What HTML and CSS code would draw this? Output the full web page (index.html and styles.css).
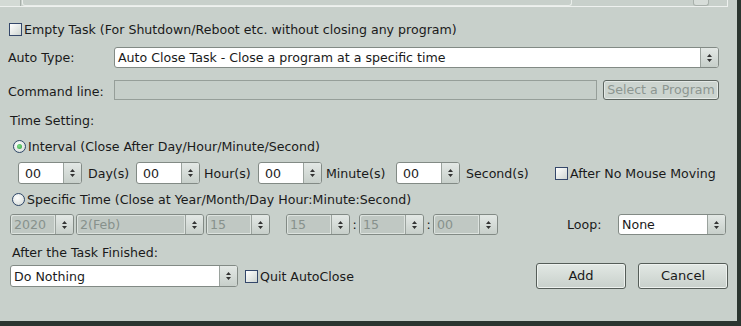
FILE: index.html
```html
<!DOCTYPE html>
<html>
<head>
<meta charset="UTF-8">
<title>Auto Close Task</title>
<link rel="stylesheet" href="styles.css">
</head>
<body>
<div class="frame">
    <div class="topstrip">
        <div class="ts-cell"></div>
        <div class="ts-field"></div>
        <div class="ts-btn"></div>
    </div>

    <div class="row r-empty">
        <span class="chk"></span><span class="ctext">Empty Task (For Shutdown/Reboot etc. without closing any program)</span>
    </div>

    <div class="row r-type">
        <span class="lbl">Auto Type:</span>
        <div class="field w-type"><span class="val">Auto Close Task - Close a program at a specific time</span><span class="arr"><svg width="5" height="8" viewBox="0 0 5 8"><path d="M2.5 0L5 3H0z M0 5h5L2.5 8z" fill="#333"/></svg></span></div>
    </div>

    <div class="row r-cmd">
        <span class="lbl lbl-low">Command line:</span>
        <div class="input-dis"></div>
        <div class="btn-dis">Select a Program</div>
    </div>

    <div class="row r-time">
        <span class="plain">Time Setting:</span>
    </div>

    <div class="row r-interval">
        <span class="radio on"><i></i></span><span class="rtext">Interval (Close After Day/Hour/Minute/Second)</span>
    </div>

    <div class="row r-spin">
        <div class="field spin"><span class="val">00</span><span class="arr"><svg width="5" height="8" viewBox="0 0 5 8"><path d="M2.5 0L5 3H0z M0 5h5L2.5 8z" fill="#333"/></svg></span></div>
        <span class="unit u-day">Day(s)</span>
        <div class="field spin"><span class="val">00</span><span class="arr"><svg width="5" height="8" viewBox="0 0 5 8"><path d="M2.5 0L5 3H0z M0 5h5L2.5 8z" fill="#333"/></svg></span></div>
        <span class="unit u-hour">Hour(s)</span>
        <div class="field spin"><span class="val">00</span><span class="arr"><svg width="5" height="8" viewBox="0 0 5 8"><path d="M2.5 0L5 3H0z M0 5h5L2.5 8z" fill="#333"/></svg></span></div>
        <span class="unit u-min">Minute(s)</span>
        <div class="field spin"><span class="val">00</span><span class="arr"><svg width="5" height="8" viewBox="0 0 5 8"><path d="M2.5 0L5 3H0z M0 5h5L2.5 8z" fill="#333"/></svg></span></div>
        <span class="unit u-sec">Second(s)</span>
        <span class="chk"></span><span class="ctext">After No Mouse Moving</span>
    </div>

    <div class="row r-specific">
        <span class="radio"></span><span class="rtext">Specific Time (Close at Year/Month/Day Hour:Minute:Second)</span>
    </div>

    <div class="row r-date">
        <div class="field dis w-year"><span class="val">2020</span><span class="arr"><svg width="5" height="8" viewBox="0 0 5 8"><path d="M2.5 0L5 3H0z M0 5h5L2.5 8z" fill="#333"/></svg></span></div>
        <div class="field dis w-month"><span class="val">2(Feb)</span><span class="arr"><svg width="5" height="8" viewBox="0 0 5 8"><path d="M2.5 0L5 3H0z M0 5h5L2.5 8z" fill="#333"/></svg></span></div>
        <div class="field dis w-day"><span class="val">15</span><span class="arr"><svg width="5" height="8" viewBox="0 0 5 8"><path d="M2.5 0L5 3H0z M0 5h5L2.5 8z" fill="#333"/></svg></span></div>
        <div class="field dis w-hh"><span class="val">15</span><span class="arr"><svg width="5" height="8" viewBox="0 0 5 8"><path d="M2.5 0L5 3H0z M0 5h5L2.5 8z" fill="#333"/></svg></span></div>
        <span class="colon">:</span>
        <div class="field dis w-mm"><span class="val">15</span><span class="arr"><svg width="5" height="8" viewBox="0 0 5 8"><path d="M2.5 0L5 3H0z M0 5h5L2.5 8z" fill="#333"/></svg></span></div>
        <span class="colon">:</span>
        <div class="field dis w-mm"><span class="val">00</span><span class="arr"><svg width="5" height="8" viewBox="0 0 5 8"><path d="M2.5 0L5 3H0z M0 5h5L2.5 8z" fill="#333"/></svg></span></div>
        <span class="loop-lbl">Loop:</span>
        <div class="field w-loop"><span class="val">None</span><span class="arr"><svg width="5" height="8" viewBox="0 0 5 8"><path d="M2.5 0L5 3H0z M0 5h5L2.5 8z" fill="#333"/></svg></span></div>
    </div>

    <div class="row r-after">
        <span class="plain">After the Task Finished:</span>
    </div>

    <div class="row r-bottom">
        <div class="field w-after"><span class="val">Do Nothing</span><span class="arr"><svg width="5" height="8" viewBox="0 0 5 8"><path d="M2.5 0L5 3H0z M0 5h5L2.5 8z" fill="#333"/></svg></span></div>
        <span class="chk"></span><span class="ctext">Quit AutoClose</span>
        <div class="btn b-add">Add</div>
        <div class="btn b-cancel">Cancel</div>
    </div>
</div>
</body>
</html>
```

FILE: styles.css
```css
/* Auto Close task dialog */
html, body{
    margin: 0;
    padding: 0;
    background: #2b3530;
}
body{
    width: 741px;
    height: 326px;
    overflow: hidden;
    font-family: "DejaVu Sans", Verdana, sans-serif;
    font-size: 12.6px;
    color: #1a1a1a;
}
.frame{
    width: 737px;
    height: 321px;
    background: #c8d0cb;
}

/* leftover bottom of the list above */
.topstrip{
    display: flex;
    width: 727px;
    height: 6px;
    border-bottom: 1px solid #eef1ef;
    border-right: 1px solid #eef1ef;
}
.ts-cell{
    width: 20px;
    background: #d3dad5;
    border-right: 1px solid #a7afaa;
}
.ts-field{
    width: 548px;
    margin-left: 1px;
    border: 1px solid #e9edea;
    border-top: none;
    border-radius: 0 0 3px 3px;
}
.ts-btn{
    width: 14px;
    margin-left: 121px;
    border: 1px solid #a9b1ac;
    border-top: none;
    border-radius: 0 0 3px 3px;
    background: #d7ddd9;
}

.row{
    display: flex;
    align-items: center;
    white-space: nowrap;
}

/* checkbox + radio */
.chk{
    width: 11px;
    height: 11px;
    border: 1px solid #34476a;
    background: linear-gradient(135deg, #ffffff, #cfd6d2);
    flex: none;
}
.ctext{
    margin-left: 2px;
}
.radio{
    width: 11px;
    height: 11px;
    border: 1px solid #2e4668;
    border-radius: 50%;
    background: radial-gradient(circle at 40% 35%, #ffffff, #d0d7d3);
    display: flex;
    align-items: center;
    justify-content: center;
    flex: none;
}
.radio i{
    width: 5px;
    height: 5px;
    border-radius: 50%;
    background: radial-gradient(circle at 40% 40%, #7fe08a, #2f9e3c);
}
.rtext{
    margin-left: 2px;
}

/* rows */
.r-empty{
    height: 18px;
    margin-top: 13px;
    padding-left: 9px;
}
.r-type{
    height: 21px;
    margin-top: 9px;
    padding-left: 8px;
}
.lbl{
    width: 106px;
    flex: none;
}
.lbl-low{
    padding-top: 4px;
}
.r-cmd{
    height: 21px;
    margin-top: 11px;
    padding-left: 8px;
}
.r-time{
    height: 18px;
    margin-top: 11px;
    padding-left: 10px;
}
.r-interval{
    height: 18px;
    margin-top: 8px;
    padding-left: 13px;
}
.r-spin{
    height: 22px;
    margin-top: 7px;
    padding-left: 18px;
}
.r-specific{
    height: 18px;
    margin-top: 6px;
    padding-left: 12px;
}
.r-date{
    height: 21px;
    margin-top: 6px;
    padding-left: 10px;
    padding-right: 11px;
}
.r-after{
    height: 18px;
    margin-top: 8px;
    padding-left: 12px;
}
.r-bottom{
    height: 26px;
    margin-top: 2px;
    padding-left: 10px;
    padding-right: 9px;
}

/* combo / spin fields */
.field{
    display: flex;
    box-sizing: border-box;
    height: 100%;
    border: 1px solid #828a85;
    border-radius: 3px;
    background: #ffffff;
    flex: none;
}
.field .val{
    flex: 1;
    padding-left: 3px;
    display: flex;
    align-items: center;
    border-radius: 2px 0 0 2px;
}
.field .arr{
    width: 17px;
    border-left: 1px solid #9aa29d;
    border-radius: 0 2px 2px 0;
    background: linear-gradient(#e3e8e5, #c7cfca);
    display: flex;
    align-items: center;
    justify-content: center;
}
.field.dis{
    background: #c0c8c3;
    color: #87918c;
}
.field.dis .val{
    box-shadow: inset 1px 1px 0 #dde3df, inset -1px -1px 0 #dde3df;
}
.w-type{ width: 605px; }
.spin{ width: 64px; }
.spin .val{ padding-left: 6px; }
.unit{ flex: none; }
.u-day{ width: 48px; padding-left: 6px; }
.u-hour{ width: 54px; padding-left: 4px; }
.u-min{ width: 70px; padding-left: 4px; }
.u-sec{ width: 89px; padding-left: 6px; }
.w-year{ width: 64px; }
.w-month{ width: 128px; margin-left: 2px; }
.w-day{ width: 64px; margin-left: 2px; }
.w-hh{ width: 64px; margin-left: 16px; }
.w-mm{ width: 65px; }
.colon{
    width: 9px;
    text-align: center;
    flex: none;
}
.loop-lbl{
    margin-left: auto;
    width: 51px;
    flex: none;
}
.w-loop{ width: 108px; }
.w-after{ width: 228px; height: 22px; }
.r-bottom .chk{ margin-left: 7px; }

/* command line */
.input-dis{
    width: 483px;
    height: 20px;
    box-sizing: border-box;
    border: 1px solid #969e99;
    background: #c6cec9;
    flex: none;
}
.btn-dis{
    width: 116px;
    height: 20px;
    box-sizing: border-box;
    margin-left: 6px;
    border: 1px solid #5d6560;
    border-radius: 3px;
    box-shadow: inset 0 0 0 1px #e4e9e6;
    background: #ccd4cf;
    color: #8c9691;
    text-align: center;
    line-height: 18px;
    flex: none;
}

/* push buttons */
.btn{
    width: 90px;
    height: 26px;
    box-sizing: border-box;
    border: 1px solid #555d58;
    border-radius: 3px;
    background: linear-gradient(#e2e8e4, #c8d0cb);
    box-shadow: inset 0 0 0 1px #eef2ef;
    text-align: center;
    line-height: 24px;
    font-size: 13px;
    flex: none;
}
.b-add{ margin-left: auto; }
.b-cancel{ margin-left: 12px; }
```
